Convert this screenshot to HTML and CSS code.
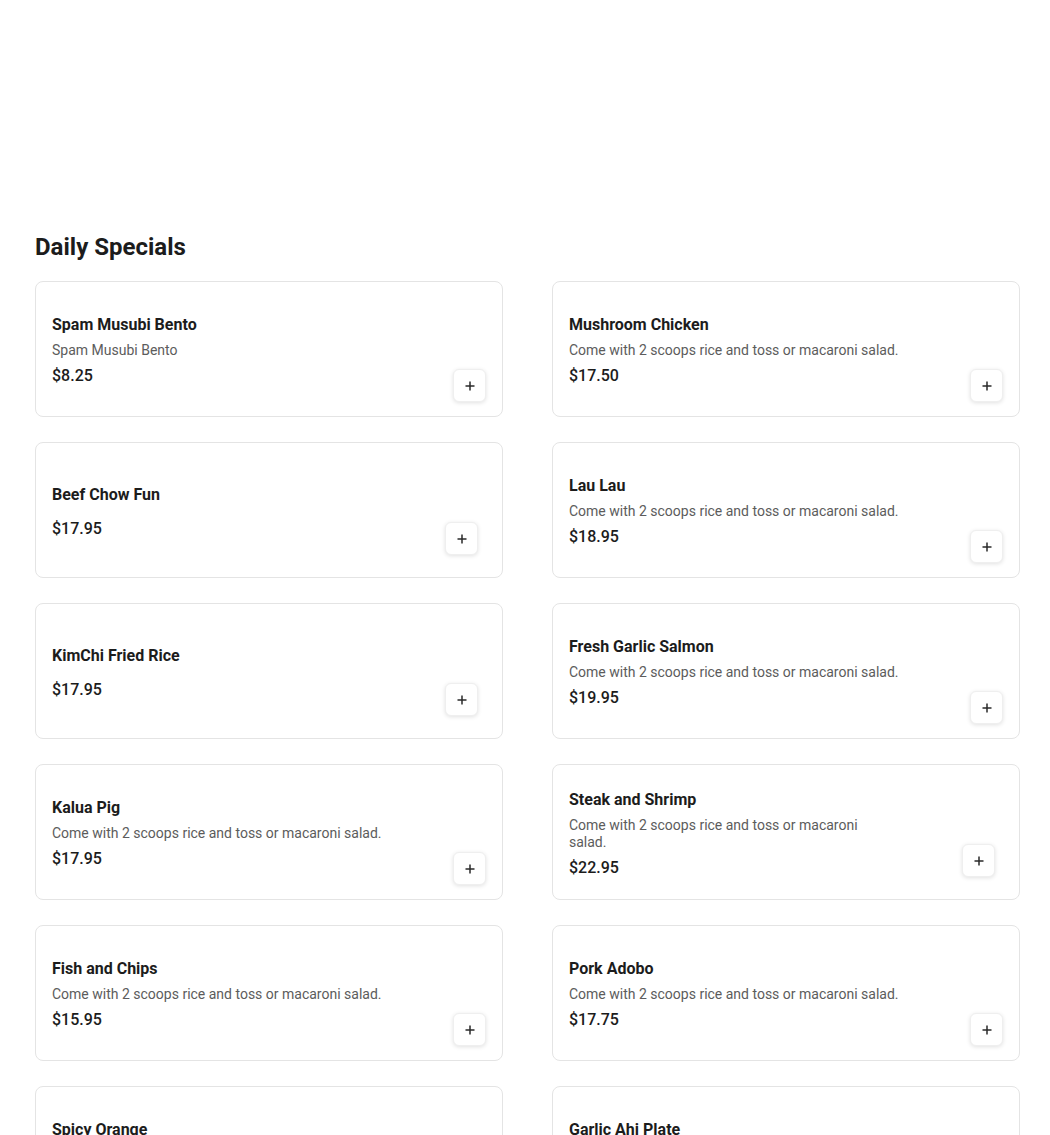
FILE: index.html
```html
<!DOCTYPE html>
<html lang="en">
<head>
<meta charset="utf-8">
<title>Daily Specials</title>
<link rel="stylesheet" href="styles.css">
</head>
<body>
<main class="page">
  <section class="section">
    <h2 class="section-title">Daily Specials</h2>
    <div class="grid">
      <article class="card">
        <div class="card-text">
          <h3 class="card-title">Spam Musubi Bento</h3>
          <p class="card-desc">Spam Musubi Bento</p>
          <p class="card-price">$8.25</p>
        </div>
        <button class="add-btn" aria-label="Add"><svg viewBox="0 0 12 12" width="12" height="12"><path d="M6 1.5v9M1.5 6h9" stroke="currentColor" stroke-width="1.5" fill="none"/></svg></button>
      </article>
      <article class="card">
        <div class="card-text">
          <h3 class="card-title">Mushroom Chicken</h3>
          <p class="card-desc">Come with 2 scoops rice and toss or macaroni salad.</p>
          <p class="card-price">$17.50</p>
        </div>
        <button class="add-btn" aria-label="Add"><svg viewBox="0 0 12 12" width="12" height="12"><path d="M6 1.5v9M1.5 6h9" stroke="currentColor" stroke-width="1.5" fill="none"/></svg></button>
      </article>
      <article class="card">
        <div class="card-text">
          <h3 class="card-title">Beef Chow Fun</h3>
          <p class="card-desc"></p>
          <p class="card-price">$17.95</p>
        </div>
        <button class="add-btn add-btn--inset" aria-label="Add"><svg viewBox="0 0 12 12" width="12" height="12"><path d="M6 1.5v9M1.5 6h9" stroke="currentColor" stroke-width="1.5" fill="none"/></svg></button>
      </article>
      <article class="card">
        <div class="card-text">
          <h3 class="card-title">Lau Lau</h3>
          <p class="card-desc">Come with 2 scoops rice and toss or macaroni salad.</p>
          <p class="card-price">$18.95</p>
        </div>
        <button class="add-btn" aria-label="Add"><svg viewBox="0 0 12 12" width="12" height="12"><path d="M6 1.5v9M1.5 6h9" stroke="currentColor" stroke-width="1.5" fill="none"/></svg></button>
      </article>
      <article class="card">
        <div class="card-text">
          <h3 class="card-title">KimChi Fried Rice</h3>
          <p class="card-desc"></p>
          <p class="card-price">$17.95</p>
        </div>
        <button class="add-btn add-btn--inset" aria-label="Add"><svg viewBox="0 0 12 12" width="12" height="12"><path d="M6 1.5v9M1.5 6h9" stroke="currentColor" stroke-width="1.5" fill="none"/></svg></button>
      </article>
      <article class="card">
        <div class="card-text">
          <h3 class="card-title">Fresh Garlic Salmon</h3>
          <p class="card-desc">Come with 2 scoops rice and toss or macaroni salad.</p>
          <p class="card-price">$19.95</p>
        </div>
        <button class="add-btn" aria-label="Add"><svg viewBox="0 0 12 12" width="12" height="12"><path d="M6 1.5v9M1.5 6h9" stroke="currentColor" stroke-width="1.5" fill="none"/></svg></button>
      </article>
      <article class="card">
        <div class="card-text">
          <h3 class="card-title">Kalua Pig</h3>
          <p class="card-desc">Come with 2 scoops rice and toss or macaroni salad.</p>
          <p class="card-price">$17.95</p>
        </div>
        <button class="add-btn" aria-label="Add"><svg viewBox="0 0 12 12" width="12" height="12"><path d="M6 1.5v9M1.5 6h9" stroke="currentColor" stroke-width="1.5" fill="none"/></svg></button>
      </article>
      <article class="card">
        <div class="card-text">
          <h3 class="card-title">Steak and Shrimp</h3>
          <p class="card-desc card-desc--narrow">Come with 2 scoops rice and toss or macaroni salad.</p>
          <p class="card-price">$22.95</p>
        </div>
        <button class="add-btn add-btn--inset" aria-label="Add"><svg viewBox="0 0 12 12" width="12" height="12"><path d="M6 1.5v9M1.5 6h9" stroke="currentColor" stroke-width="1.5" fill="none"/></svg></button>
      </article>
      <article class="card">
        <div class="card-text">
          <h3 class="card-title">Fish and Chips</h3>
          <p class="card-desc">Come with 2 scoops rice and toss or macaroni salad.</p>
          <p class="card-price">$15.95</p>
        </div>
        <button class="add-btn" aria-label="Add"><svg viewBox="0 0 12 12" width="12" height="12"><path d="M6 1.5v9M1.5 6h9" stroke="currentColor" stroke-width="1.5" fill="none"/></svg></button>
      </article>
      <article class="card">
        <div class="card-text">
          <h3 class="card-title">Pork Adobo</h3>
          <p class="card-desc">Come with 2 scoops rice and toss or macaroni salad.</p>
          <p class="card-price">$17.75</p>
        </div>
        <button class="add-btn" aria-label="Add"><svg viewBox="0 0 12 12" width="12" height="12"><path d="M6 1.5v9M1.5 6h9" stroke="currentColor" stroke-width="1.5" fill="none"/></svg></button>
      </article>
      <article class="card">
        <div class="card-text">
          <h3 class="card-title">Spicy Orange</h3>
          <p class="card-desc">Come with 2 scoops rice and toss or macaroni salad.</p>
          <p class="card-price">$17.95</p>
        </div>
        <button class="add-btn" aria-label="Add"><svg viewBox="0 0 12 12" width="12" height="12"><path d="M6 1.5v9M1.5 6h9" stroke="currentColor" stroke-width="1.5" fill="none"/></svg></button>
      </article>
      <article class="card">
        <div class="card-text">
          <h3 class="card-title">Garlic Ahi Plate</h3>
          <p class="card-desc">Come with 2 scoops rice and toss or macaroni salad.</p>
          <p class="card-price">$19.95</p>
        </div>
        <button class="add-btn" aria-label="Add"><svg viewBox="0 0 12 12" width="12" height="12"><path d="M6 1.5v9M1.5 6h9" stroke="currentColor" stroke-width="1.5" fill="none"/></svg></button>
      </article>
    </div>
  </section>
</main>
</body>
</html>
```

FILE: styles.css
```css
* {
  box-sizing: border-box;
}

html, body {
  margin: 0;
  padding: 0;
  background: #ffffff;
}

body {
  font-family: Roboto, "Noto Sans", "Liberation Sans", Arial, sans-serif;
  color: #1c1c1c;
}

.page {
  padding: 233px 30px 40px 35px;
}

.section-title {
  margin: 0 0 20px 0;
  font-size: 24px;
  line-height: 28px;
  font-weight: 700;
  color: #1c1c1c;
}

.grid {
  display: grid;
  grid-template-columns: 1fr 1fr;
  column-gap: 49px;
  row-gap: 25px;
}

.card {
  display: flex;
  align-items: stretch;
  height: 136px;
  padding: 14px 16px;
  border: 1px solid #e4e4e4;
  border-radius: 8px;
  background: #fff;
}

.card-text {
  flex: 1;
  display: flex;
  flex-direction: column;
  justify-content: center;
  min-width: 0;
  padding-top: 2px;
}

.card-title {
  margin: 0 0 8px 0;
  font-size: 16px;
  line-height: 19px;
  font-weight: 700;
  color: #1c1c1c;
}

.card-desc {
  margin: 0 0 7px 0;
  font-size: 14px;
  line-height: 17px;
  color: #5c5c5c;
}

.card-desc--narrow {
  max-width: 300px;
}

.card-price {
  margin: 0;
  font-size: 16px;
  line-height: 19px;
  font-weight: 500;
  color: #1c1c1c;
}

.add-btn {
  align-self: flex-end;
  flex: none;
  width: 33px;
  height: 33px;
  padding: 0;
  display: flex;
  align-items: center;
  justify-content: center;
  border: 1px solid #efefef;
  border-radius: 6px;
  background: #fff;
  color: #2a2a2a;
  box-shadow: 0 1px 4px rgba(0, 0, 0, 0.12);
  cursor: pointer;
}

.add-btn--inset {
  margin: 0 8px 8px 0;
}
```
